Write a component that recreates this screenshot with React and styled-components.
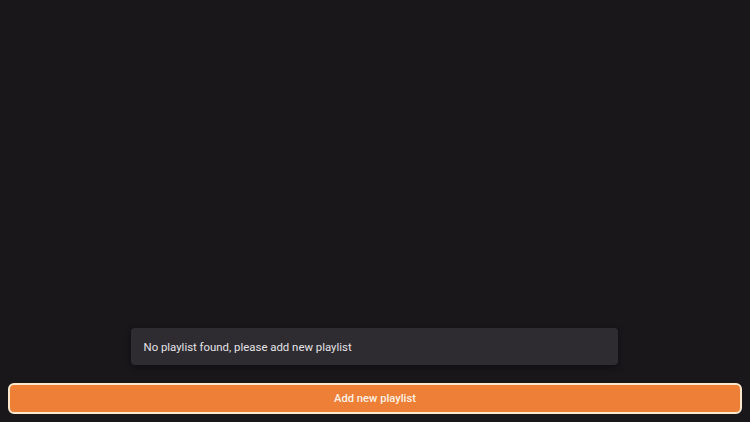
import styled, { createGlobalStyle } from 'styled-components'

const GlobalStyle = createGlobalStyle`
    html, body {
        margin: 0;
        height: 100%;
        background: #19171a;
    }
    #root {
        height: 100%;
    }
`

const Screen = styled.div`
    height: 100%;
    display: flex;
    flex-direction: column;
    justify-content: flex-end;
    align-items: center;
    padding: 0 8px 8px;
    box-sizing: border-box;
    font-family: Roboto, "Noto Sans", sans-serif;
`

const Toast = styled.div`
    width: 487px;
    height: 37px;
    box-sizing: border-box;
    display: flex;
    align-items: center;
    padding: 0 13px;
    background: #2e2c31;
    border-radius: 4px;
    box-shadow: 0 2px 6px rgba(0, 0, 0, 0.45);
    color: #e4e2e6;
    font-size: 11.4px;
    margin-bottom: 18px;
    margin-left: -2px;
`

const AddButton = styled.button`
    width: 100%;
    height: 31px;
    box-sizing: border-box;
    background: #ee7f37;
    border: 2px solid #fde7cc;
    border-radius: 6px;
    color: #fdf1e6;
    font-family: Roboto, "Noto Sans", sans-serif;
    font-size: 11.2px;
    font-weight: 500;
    cursor: pointer;
`

const App = () => {
    return (
        <>
            <GlobalStyle />
            <Screen>
                <Toast>No playlist found, please add new playlist</Toast>
                <AddButton>Add new playlist</AddButton>
            </Screen>
        </>
    )
}

export default App
